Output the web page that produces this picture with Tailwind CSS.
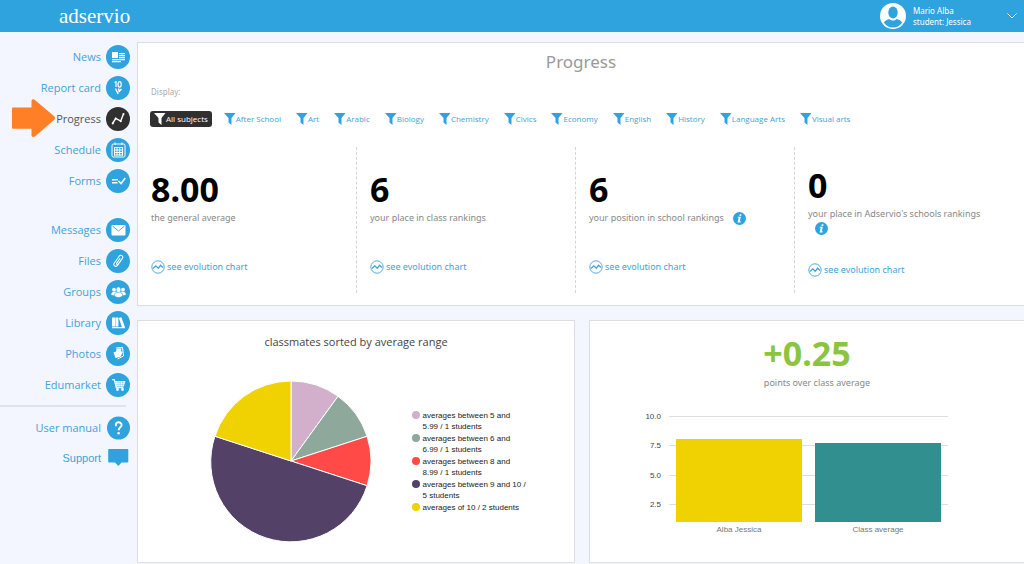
<!DOCTYPE html>
<html lang="en">
<head>
<meta charset="utf-8">
<title>Adservio – Progress</title>
<meta name="viewport" content="width=device-width, initial-scale=1">
<script src="https://cdn.jsdelivr.net/npm/@tailwindcss/browser@4"></script>
</head>
<body class="min-h-screen bg-[#f3f6ff] font-['Noto_Sans','Open_Sans',sans-serif] text-[9px] text-[#888]">

<!-- shared symbols -->
<svg class="hidden">
  <symbol id="funnel" viewBox="0 0 12 12"><path fill="currentColor" d="M0 0h11.500L7.500 5v7L4.500 9.500V5z"/></symbol>
  <symbol id="evo" viewBox="0 0 14 14"><circle cx="7" cy="7" r="6.200" fill="none" stroke="currentColor" stroke-width=".9"/><path d="M2 8.500 4.800 5.800 7.300 8.300 9.500 5.300 12 7.500" fill="none" stroke="currentColor" stroke-width="1.300"/></symbol>
  <symbol id="info" viewBox="0 0 14 14"><circle cx="7" cy="7" r="7" fill="#2ea3dd"/><path fill="#fff" d="M7.300 2.300h1.900l-.4 1.900H6.900zM5.300 5.100h3.200L7.300 10h1l-.2 1.200H4.900L6.100 6.300H5.100z"/></symbol>
</svg>

<header class="flex h-8 items-center justify-between bg-[#2ea3dd] pl-[59px] pr-[7px] text-white">
  <a href="#" class="font-['Liberation_Serif',serif] text-[21px] leading-[28px]">adservio</a>
  <button type="button" class="flex items-center text-left">
    <svg class="h-[26px] w-[26px]" viewBox="0 0 26 26"><circle cx="13" cy="13" r="13" fill="#fff"/><ellipse cx="13" cy="9.500" rx="4.700" ry="6" fill="#2ea3dd"/><path d="M3.800 19.500c1.200-2 3.500-3 5.700-3.600 2 2 5 2 7 0 2.200.6 4.500 1.600 5.700 3.600-2 3-5.200 5-9.200 5s-7.200-2-9.200-5z" fill="#2ea3dd"/></svg>
    <span class="ml-[7px] w-[94px] text-[8px] leading-[11px]">Mario Alba<br>student: Jessica</span>
    <svg class="h-[6px] w-[10px]" viewBox="0 0 10 6"><path d="M.5.5 5 5 9.500.5" fill="none" stroke="#fff" stroke-width="1"/></svg>
  </button>
</header>

<div class="flex">
  <aside class="relative w-[137px] shrink-0 pt-[13px] text-[11px] leading-6 text-[#44a2d8]">
    <nav class="pr-[7px] font-['Open_Sans',sans-serif]">
      <div class="flex flex-col gap-[7px]">
        <a href="#" class="flex justify-end gap-[5px]">News
          <svg class="h-6 w-6" viewBox="0 0 24 24"><circle cx="12" cy="12" r="12" fill="#2ea3dd"/><path fill="#fff" d="M6 7h6v6H6zM13 8h6v1.200h-6zM13 10h6v1.200h-6zM13 12h6v1.200h-6zM6 14h13v1.200H6zM6 16h9v1.200H6z"/></svg></a>
        <a href="#" class="flex justify-end gap-[5px]">Report card
          <svg class="h-6 w-6" viewBox="0 0 24 24"><circle cx="12" cy="12" r="12" fill="#2ea3dd"/><path d="M8.600 6.500 10 5.800V11M12 8.400c0-3.600 3.200-3.600 3.200 0s-3.200 3.600-3.200 0z" fill="none" stroke="#fff" stroke-width="1.200"/><path d="m9.500 12.500 2.600 5.500M12.500 12.500l.6 3 2.400-2.500" fill="none" stroke="#fff" stroke-width="1.400"/></svg></a>
        <a href="#" aria-current="page" class="flex justify-end gap-[5px] text-[#555]">Progress
          <svg class="h-6 w-6" viewBox="0 0 24 24"><circle cx="12" cy="12" r="12" fill="#303030"/><path d="m6.500 16.500 3.200-5 5 2.600L17.500 7" fill="none" stroke="#fff" stroke-width="1.400"/><circle cx="6.700" cy="16.500" r="1" fill="#fff"/><circle cx="9.700" cy="11.500" r="1" fill="#fff"/><circle cx="14.700" cy="14.200" r="1" fill="#fff"/><circle cx="17.500" cy="7" r="1" fill="#fff"/></svg></a>
        <a href="#" class="flex justify-end gap-[5px]">Schedule
          <svg class="h-6 w-6" viewBox="0 0 24 24"><circle cx="12" cy="12" r="12" fill="#2ea3dd"/><rect x="6" y="6" width="13" height="13" rx="1.500" fill="none" stroke="#fff"/><path d="M9 4.500V7M16 4.500V7M8 9.500h9M8 12h9M8 14.500h9M8 17h9M8.500 9v8.500M11 9v8.500M13.700 9v8.500M16.500 9v8.500" stroke="#fff" stroke-width="1"/></svg></a>
        <a href="#" class="flex justify-end gap-[5px]">Forms
          <svg class="h-6 w-6" viewBox="0 0 24 24"><circle cx="12" cy="12" r="12" fill="#2ea3dd"/><path d="M6 10.700h6M6 13.700h5.500M12.500 12l2.500 2.500 4.300-5.500" fill="none" stroke="#fff" stroke-width="1.500"/></svg></a>
      </div>
      <div class="mt-[25px] flex flex-col gap-[7px]">
        <a href="#" class="flex justify-end gap-[5px]">Messages
          <svg class="h-6 w-6" viewBox="0 0 24 24"><circle cx="12" cy="12" r="12" fill="#2ea3dd"/><rect x="5.500" y="7" width="14" height="10.500" rx="1" fill="#fff"/><path d="m6.500 8 6 5 6-5" fill="none" stroke="#2ea3dd" stroke-width=".9"/></svg></a>
        <a href="#" class="flex justify-end gap-[5px]">Files
          <svg class="h-6 w-6" viewBox="0 0 24 24"><circle cx="12" cy="12" r="12" fill="#2ea3dd"/><path d="m16 10-4.300 6.200c-1.800 2.400-5 .4-3.500-2l5-7c1.500-2 4.500-.2 3.200 2l-4.200 5.800c-.8 1-2.200.2-1.500-.9l3.500-4.800" fill="none" stroke="#fff" stroke-width="1.100"/></svg></a>
        <a href="#" class="flex justify-end gap-[5px]">Groups
          <svg class="h-6 w-6" viewBox="0 0 24 24"><circle cx="12" cy="12" r="12" fill="#2ea3dd"/><g fill="#fff"><circle cx="8" cy="9.700" r="1.900"/><circle cx="17" cy="9.700" r="1.900"/><path d="M5.300 15c0-2.500 1-3.300 3-3.300h8.500c2 0 3 .8 3 3.300l-4 .5h-7z"/><path stroke="#2ea3dd" stroke-width=".6" d="M8.300 15.800c0-2.600 1.500-3.600 4.200-3.600s4.200 1 4.200 3.600c-2.500 2.200-5.900 2.200-8.400 0z"/><ellipse cx="12.500" cy="9.800" rx="2.300" ry="2.900" stroke="#2ea3dd" stroke-width=".5"/></g></svg></a>
        <a href="#" class="flex justify-end gap-[5px]">Library
          <svg class="h-6 w-6" viewBox="0 0 24 24"><circle cx="12" cy="12" r="12" fill="#2ea3dd"/><path fill="#fff" d="M6 6.500h3v9H6zM9.400 6.500h3v9h-3zM12.800 7 15.400 6.300l3.600 9.900-2.800.8zM6 16h13v1.300H6z"/></svg></a>
        <a href="#" class="flex justify-end gap-[5px]">Photos
          <svg class="h-6 w-6" viewBox="0 0 24 24"><circle cx="12" cy="12" r="12" fill="#2ea3dd"/><path d="m10 6 6.500-.7L17.500 14l-6 3" fill="none" stroke="#fff" stroke-width="1"/><path fill="#fff" d="m10.500 6.800 5-.6-.5 2.500 1.500 1.500-2 4.500-5 1.300-2-5.500 2.500-1z"/></svg></a>
        <a href="#" class="flex justify-end gap-[5px]">Edumarket
          <svg class="h-6 w-6" viewBox="0 0 24 24"><circle cx="12" cy="12" r="12" fill="#2ea3dd"/><path d="M6 6.700h2.300l2 7.800h7" fill="none" stroke="#fff" stroke-width="1.300"/><path fill="#fff" d="M9 8h10.500l-1.700 5.500h-7.500z"/><path d="M9 9.800h10M10 11.600h9M12 8v5.500M14.300 8v5.500M16.600 8v5.500" stroke="#2ea3dd" stroke-width=".3"/><circle cx="11.500" cy="16.500" r="1.400" fill="#fff"/><circle cx="16.500" cy="16.500" r="1.400" fill="#fff"/></svg></a>
      </div>
    </nav>
    <hr class="mr-[11px] mt-2 border-t-2 border-[#e0e2e6]">
    <nav class="mt-[9px] flex flex-col gap-[6px] pr-[7px]">
      <a href="#" class="flex justify-end gap-[5px] font-['Open_Sans',sans-serif]">User manual
        <svg class="h-6 w-6" viewBox="0 0 24 24"><circle cx="12.500" cy="12" r="11.500" fill="#2ea3dd"/><path d="M9.800 9c0-3.600 5.800-3.600 5.800 0 0 2.300-2.900 2.300-2.900 5.300" fill="none" stroke="#fff" stroke-width="1.900"/><circle cx="9.900" cy="9.300" r="1.100" fill="#fff"/><circle cx="12.600" cy="17.300" r="1.300" fill="#fff"/></svg></a>
      <a href="#" class="flex justify-end gap-[5px] font-['Liberation_Sans',sans-serif]">Support
        <svg class="h-6 w-6" viewBox="0 0 24 24"><path fill="#2ea3dd" d="M3 3h18.500q.8 0 .8.800v12q0 .8-.8.800h-6L12.300 20l-3.200-3.400H3q-.8 0-.8-.8v-12Q2.200 3 3 3z"/></svg></a>
    </nav>
    <!-- pointer to the active section -->
    <svg class="absolute left-3 top-[67px] h-[38px] w-11" viewBox="0 0 44 38"><path fill="#ff7f27" d="M1 8.500h18.500V1.500q1.500-2.500 4 0L42.500 17.500q1 1.500 0 3L23.500 37q-2.500 2-4 0v-7.300H1q-1 0-1-1v-19q0-1.200 1-1.200z"/></svg>
  </aside>

  <main class="min-w-0 grow pt-[10px]">
    <section class="border-y border-l border-[#dcdee2] bg-white pb-3">
      <h1 class="pt-[7px] text-center text-[17px] leading-6 text-[#999]">Progress</h1>
      <p class="ml-[13px] mt-3 text-[8px] leading-3 text-[#aaa]">Display:</p>
      <div class="ml-3 mt-[13px] flex gap-[9px] font-['Open_Sans',sans-serif] text-[8px] leading-4 text-[#44a2d8]">
        <button type="button" aria-pressed="true" class="flex items-center rounded-[3px] bg-[#303030] px-1 text-white"><svg class="h-3 w-3"><use href="#funnel"/></svg>All subjects</button>
        <button type="button" class="flex items-center px-[3px]"><svg class="h-3 w-3 text-[#2ea3dd]"><use href="#funnel"/></svg>After School</button>
        <button type="button" class="flex items-center px-[3px]"><svg class="h-3 w-3 text-[#2ea3dd]"><use href="#funnel"/></svg>Art</button>
        <button type="button" class="flex items-center px-[3px]"><svg class="h-3 w-3 text-[#2ea3dd]"><use href="#funnel"/></svg>Arabic</button>
        <button type="button" class="flex items-center px-[3px]"><svg class="h-3 w-3 text-[#2ea3dd]"><use href="#funnel"/></svg>Biology</button>
        <button type="button" class="flex items-center px-[3px]"><svg class="h-3 w-3 text-[#2ea3dd]"><use href="#funnel"/></svg>Chemistry</button>
        <button type="button" class="flex items-center px-[3px]"><svg class="h-3 w-3 text-[#2ea3dd]"><use href="#funnel"/></svg>Civics</button>
        <button type="button" class="flex items-center px-[3px]"><svg class="h-3 w-3 text-[#2ea3dd]"><use href="#funnel"/></svg>Economy</button>
        <button type="button" class="flex items-center px-[3px]"><svg class="h-3 w-3 text-[#2ea3dd]"><use href="#funnel"/></svg>English</button>
        <button type="button" class="flex items-center px-[3px]"><svg class="h-3 w-3 text-[#2ea3dd]"><use href="#funnel"/></svg>History</button>
        <button type="button" class="flex items-center px-[3px]"><svg class="h-3 w-3 text-[#2ea3dd]"><use href="#funnel"/></svg>Language Arts</button>
        <button type="button" class="flex items-center px-[3px]"><svg class="h-3 w-3 text-[#2ea3dd]"><use href="#funnel"/></svg>Visual arts</button>
      </div>
      <div class="mt-5 grid min-h-[146px] grid-cols-4 pr-[10px] leading-[14px]">
        <div class="flex flex-col justify-center border-r border-dashed border-[#d4d4d4] pl-[13px] pr-3">
          <strong class="text-[34px] leading-[44px] text-black">8.00</strong>
          <p class="min-h-[21px]">the general average</p>
          <a href="#" class="mt-7 flex items-center gap-[2px] text-[#44a2d8]"><svg class="h-[14px] w-[14px]"><use href="#evo"/></svg>see evolution chart</a>
        </div>
        <div class="flex flex-col justify-center border-r border-dashed border-[#d4d4d4] pl-[13px] pr-3">
          <strong class="text-[34px] leading-[44px] text-black">6</strong>
          <p class="min-h-[21px]">your place in class rankings</p>
          <a href="#" class="mt-7 flex items-center gap-[2px] text-[#44a2d8]"><svg class="h-[14px] w-[14px]"><use href="#evo"/></svg>see evolution chart</a>
        </div>
        <div class="flex flex-col justify-center border-r border-dashed border-[#d4d4d4] pl-[13px] pr-3">
          <strong class="text-[34px] leading-[44px] text-black">6</strong>
          <p class="min-h-[21px]">your position in school rankings <svg class="ml-[7px] inline-block h-[13px] w-[13px]"><use href="#info"/></svg></p>
          <a href="#" class="mt-7 flex items-center gap-[2px] text-[#44a2d8]"><svg class="h-[14px] w-[14px]"><use href="#evo"/></svg>see evolution chart</a>
        </div>
        <div class="flex flex-col justify-center pl-[13px] pr-3">
          <strong class="text-[34px] leading-[44px] text-black">0</strong>
          <p class="min-h-[21px]">your place in Adservio's schools rankings <svg class="ml-[7px] inline-block h-[13px] w-[13px]"><use href="#info"/></svg></p>
          <a href="#" class="mt-7 flex items-center gap-[2px] text-[#44a2d8]"><svg class="h-[14px] w-[14px]"><use href="#evo"/></svg>see evolution chart</a>
        </div>
      </div>
    </section>

    <div class="mt-[14px] grid grid-cols-[438fr_435fr] gap-[14px]">
      <section class="border border-[#dcdee2] bg-white pb-5">
        <h2 class="pt-[13px] text-center font-['Open_Sans',sans-serif] text-[11px] leading-4 text-[#444]">classmates sorted by average range</h2>
        <div class="mt-[30px] flex items-center justify-center gap-10 pl-6">
          <svg class="h-[162px] w-[162px]" viewBox="-81 -81 162 162" role="img" aria-label="Pie chart of classmates by average range">
            <g stroke="#fff" stroke-width="1">
              <path fill="#d2b0cc" d="M0 0V-80A80 80 0 0 1 47.020-64.720z"/>
              <path fill="#8ea99b" d="M0 0 47.020-64.720A80 80 0 0 1 76.080-24.720z"/>
              <path fill="#ff4a48" d="M0 0 76.080-24.720A80 80 0 0 1 76.080 24.720z"/>
              <path fill="#544168" d="M0 0 76.080 24.720A80 80 0 1 1-76.080-24.720z"/>
              <path fill="#f0d203" d="M0 0-76.080-24.720A80 80 0 0 1 0-80z"/>
            </g>
          </svg>
          <ul class="flex w-[115px] flex-col gap-px font-['Liberation_Sans',sans-serif] text-[8px] leading-[11px] text-[#222]">
            <li class="flex gap-[3px]"><span class="mt-px h-2 w-2 shrink-0 rounded-full bg-[#d2b0cc]"></span><span>averages between 5 and 5.99 / 1 students</span></li>
            <li class="flex gap-[3px]"><span class="mt-px h-2 w-2 shrink-0 rounded-full bg-[#8ea99b]"></span><span>averages between 6 and 6.99 / 1 students</span></li>
            <li class="flex gap-[3px]"><span class="mt-px h-2 w-2 shrink-0 rounded-full bg-[#ff4a48]"></span><span>averages between 8 and 8.99 / 1 students</span></li>
            <li class="flex gap-[3px]"><span class="mt-px h-2 w-2 shrink-0 rounded-full bg-[#544168]"></span><span>averages between 9 and 10 / 5 students</span></li>
            <li class="flex gap-[3px]"><span class="mt-px h-2 w-2 shrink-0 rounded-full bg-[#f0d203]"></span><span>averages of 10 / 2 students</span></li>
          </ul>
        </div>
      </section>

      <section class="flex flex-col items-center border-y border-l border-[#dcdee2] bg-white">
        <strong class="mt-[10px] text-[34px] leading-[44px] text-[#8bc53f]">+0.25</strong>
        <p class="ml-5 mt-px leading-[14px]">points over class average</p>
        <svg class="mr-[26px] mt-5 h-[130px] w-[308px] font-['Liberation_Sans',sans-serif] text-[8px]" viewBox="0 0 308 130" role="img" aria-label="Bar chart: Alba Jessica 8.00, class average 7.75">
          <path d="M29 6.500h279M29 35.500h279M29 65.500h279M29 94.500h279" stroke="#dedede"/>
          <path fill="#f0d203" d="M36 29h126v83H36z"/>
          <path fill="#318f8f" d="M175 33h126v79H175z"/>
          <g fill="#444" text-anchor="end"><text x="21" y="9">10.0</text><text x="21" y="38">7.5</text><text x="21" y="68">5.0</text><text x="21" y="97">2.5</text></g>
          <g fill="#777" text-anchor="middle"><text x="99" y="122">Alba Jessica</text><text x="238" y="122">Class average</text></g>
        </svg>
      </section>
    </div>
  </main>
</div>
</body>
</html>
